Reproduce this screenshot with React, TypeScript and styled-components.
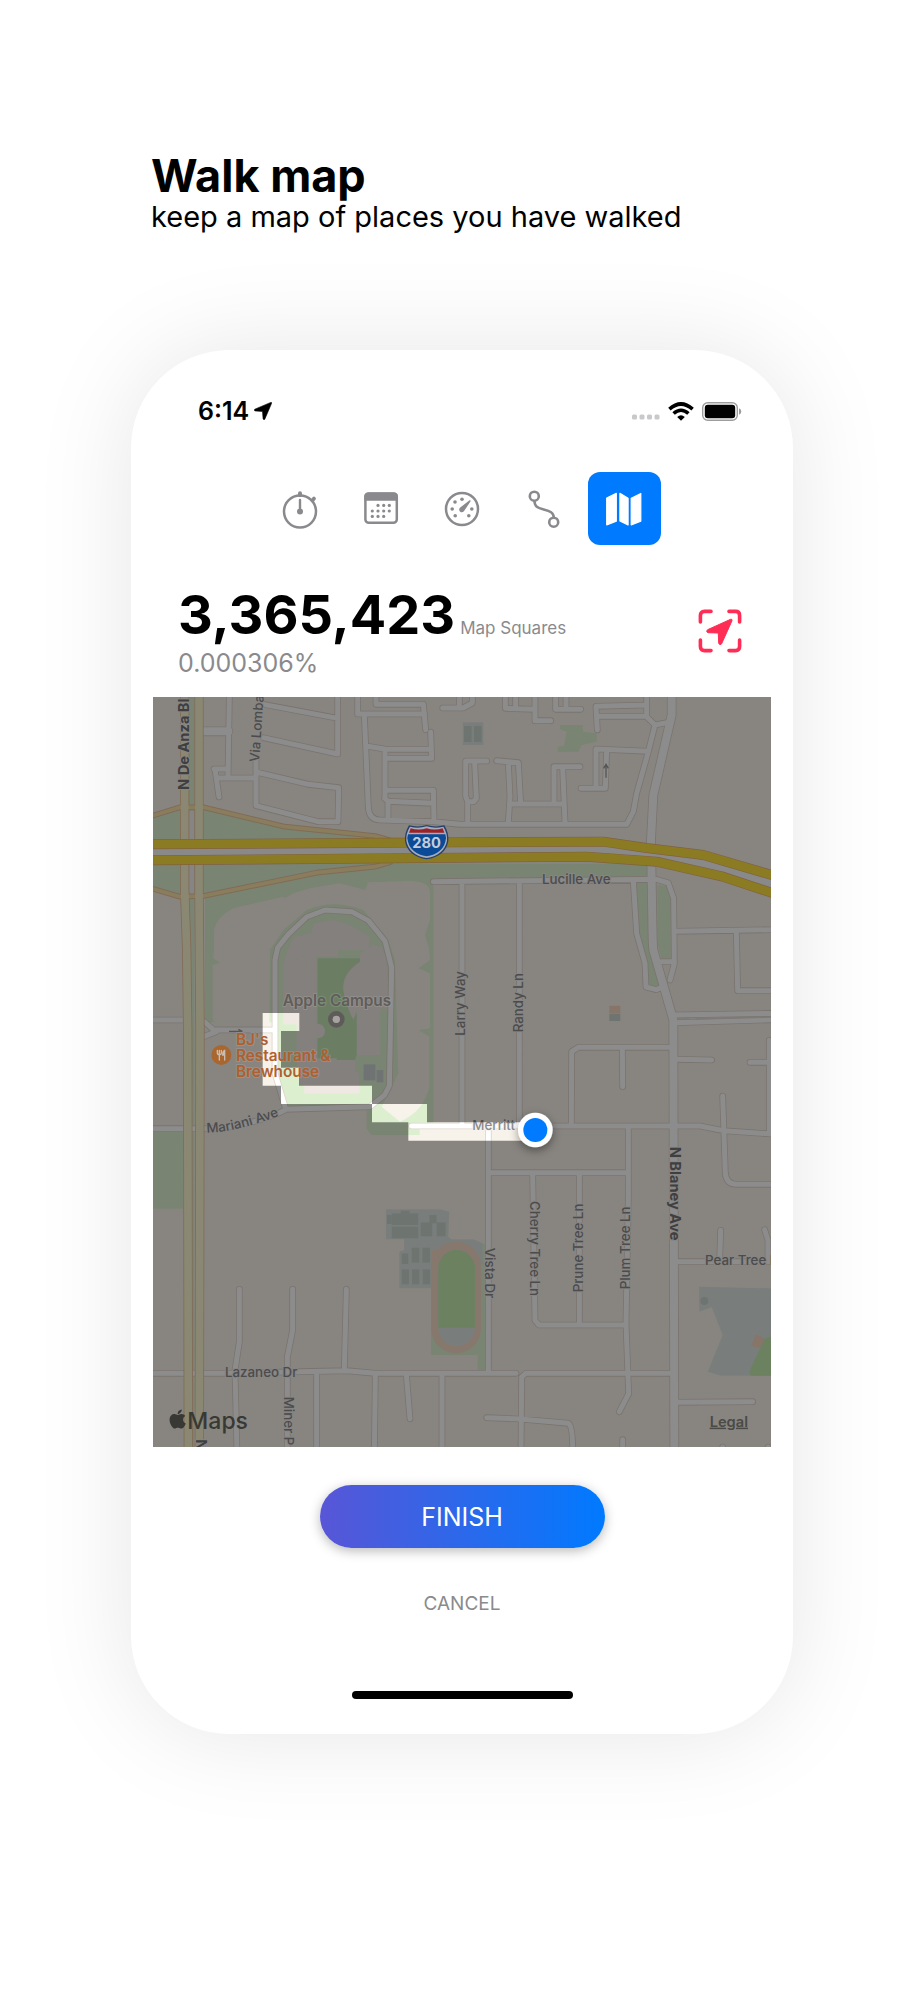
import React from "react";
import styled, { createGlobalStyle } from "styled-components";
import { FaApple } from "react-icons/fa";

const GlobalStyle = createGlobalStyle`
  *, *::before, *::after { box-sizing: border-box; }
  body {
    margin: 0;
    background: #fff;
    color: #000;
    font-family: Inter, "Liberation Sans", sans-serif;
  }
  button { font: inherit; border: 0; background: none; padding: 0; cursor: pointer; }
`;

const Page = styled.main`
  min-height: 100vh;
  padding: 152px 16px 200px;
  overflow: hidden;
`;

const Column = styled.div`
  width: 100%;
  max-width: 662px;
  margin: 0 auto;
`;

const Intro = styled.header`
  padding: 0 20px;
  margin-bottom: 116px;
`;

const Title = styled.h1`
  margin: 0;
  font-size: 45px;
  line-height: 48px;
  font-weight: 700;
`;

const Subtitle = styled.p`
  margin: 0;
  font-size: 29px;
  line-height: 34px;
`;

const Phone = styled.section`
  border-radius: 98px;
  background: #fff;
  padding: 43px 0 35px;
  box-shadow: 0 0 100px rgba(0, 0, 0, 0.1);
`;

const StatusBar = styled.div`
  display: flex;
  align-items: center;
  justify-content: space-between;
  height: 36px;
  padding: 0 51px 0 67px;
`;

const StatusGroup = styled.div<{ $gap: number }>`
  display: flex;
  align-items: center;
  gap: ${(p) => p.$gap}px;
`;

const Clock = styled.span`
  font-size: 25px;
  line-height: 32px;
  font-weight: 600;
`;

const Tabs = styled.nav`
  display: flex;
  justify-content: center;
  gap: 8px;
  margin-top: 43px;
`;

const Tab = styled.button<{ $active?: boolean }>`
  display: grid;
  place-items: center;
  width: 73px;
  height: 73px;
  border-radius: 12px;
  color: ${(p) => (p.$active ? "#fff" : "#8a8a8e")};
  background: ${(p) => (p.$active ? "#007aff" : "transparent")};
`;

const Summary = styled.div`
  display: flex;
  align-items: center;
  justify-content: space-between;
  padding: 0 49px 0 47px;
  margin: 38px 0 18px;
`;

const CountLine = styled.div`
  display: flex;
  align-items: baseline;
  gap: 5px;
`;

const Count = styled.strong`
  font-size: 54px;
  line-height: 64px;
  font-weight: 700;
`;

const CountUnit = styled.span`
  font-size: 17px;
  line-height: 20px;
  color: #8a8a8e;
`;

const Share = styled.div`
  font-size: 25px;
  line-height: 32px;
  color: #8a8a8e;
`;

const LocateButton = styled.button`
  display: block;
  height: 48px;
`;

const MapFrame = styled.div`
  margin: 0 22px;
`;

const MapCanvas = styled.svg`
  display: block;
  width: 100%;
  height: auto;
  overflow: hidden;
`;

const Street = styled.text<{ $major?: boolean }>`
  font-size: ${(p) => (p.$major ? 44 : 40)}px;
  font-weight: ${(p) => (p.$major ? 700 : 500)};
  fill: ${(p) => (p.$major ? "#747474" : "#8a8a8a")};
  stroke: #f6f3f0;
  stroke-width: 6px;
  stroke-linejoin: round;
  paint-order: stroke;
`;

const Place = styled.text<{ $color: string }>`
  font-size: 46px;
  font-weight: 600;
  fill: ${(p) => p.$color};
  stroke: #f2efec;
  stroke-opacity: 0.14;
  stroke-width: 6px;
  stroke-linejoin: round;
  paint-order: stroke;
`;

const MapBrand = styled.text`
  font-size: 69px;
  font-weight: 500;
  fill: #383834;
`;

const LegalText = styled.text`
  font-size: 44px;
  font-weight: 600;
  fill: #4a4a47;
  text-decoration: underline;
`;

const ShieldNumber = styled.text`
  font-size: 44px;
  font-weight: 700;
  fill: #c4cdda;
`;

const Actions = styled.div`
  display: flex;
  flex-direction: column;
  align-items: center;
  padding: 38px 24px 0;
`;

const FinishButton = styled.button`
  width: 285px;
  max-width: 100%;
  height: 63px;
  border-radius: 32px;
  color: #fff;
  font-size: 25px;
  background: linear-gradient(90deg, #5856d6, #007aff);
  box-shadow: 0 3px 12px rgba(0, 0, 0, 0.28);
`;

const CancelButton = styled.button`
  margin-top: 40px;
  font-size: 19px;
  line-height: 32px;
  color: #8a8a8e;
`;

const HomeBar = styled.div`
  width: 221px;
  height: 8px;
  border-radius: 4px;
  margin: 71px auto 0;
  background: #000;
`;

const calendarDots = [
  [17, 16.4], [22.7, 16.4], [28.3, 16.4],
  [11.3, 22], [17, 22], [22.7, 22], [28.3, 22],
  [11.3, 27.4], [17, 27.4], [22.7, 27.4],
];

const gaugeDots = [[13.2, 26.8], [10.2, 20], [13, 13], [20, 10.2], [29.8, 20], [26.8, 26.8]];

const tabs: { name: string; icon: React.ReactNode }[] = [
  {
    name: "Timer",
    icon: (
      <g fill="none" stroke="currentColor" strokeWidth="2.5" strokeLinecap="round">
        <circle cx="20" cy="22.5" r="16" />
        <path d="M20 4.2V6" strokeWidth="4" />
        <path d="M32.4 11.4L34 9.6" strokeWidth="3.8" />
        <path d="M20 11V22" strokeWidth="2.4" />
        <circle cx="20" cy="22.5" r="3" fill="currentColor" stroke="none" />
      </g>
    ),
  },
  {
    name: "Calendar",
    icon: (
      <g fill="currentColor">
        <rect x="4.4" y="4.6" width="31.4" height="29.2" rx="3.4" fill="none" stroke="currentColor" strokeWidth="2.5" />
        <path d="M3.2 11.8V7.4q0-4 4-4h25.8q4 0 4 4v4.4z" />
        {calendarDots.map(([x, y]) => (
          <circle key={`${x}-${y}`} cx={x} cy={y} r="1.6" />
        ))}
      </g>
    ),
  },
  {
    name: "Speed",
    icon: (
      <g fill="currentColor">
        <circle cx="20" cy="20" r="16" fill="none" stroke="currentColor" strokeWidth="2.5" />
        {gaugeDots.map(([x, y]) => (
          <circle key={`${x}-${y}`} cx={x} cy={y} r="1.8" />
        ))}
        <path d="M28.6 12.2L21.9 22.3q-1.7 1.8-3.7.5-1.9-1.8-.3-4l9.7-7.5q1.1-.4 1 .9z" />
      </g>
    ),
  },
  {
    name: "Route",
    icon: (
      <g fill="none" stroke="currentColor" strokeWidth="2.6">
        <circle cx="11.3" cy="7.2" r="4.5" />
        <circle cx="30.7" cy="33.2" r="4.5" />
        <path d="M11.4 11.8C11.7 17.8 14.4 18.8 20.7 20.5S30.7 23.5 30.8 28.6" />
      </g>
    ),
  },
  {
    name: "Map",
    icon: (
      <g fill="currentColor" stroke="currentColor" strokeWidth="1.2" strokeLinejoin="round">
        <path d="M2.7 9L12.3 4.3V32.2L2.7 35.9z" />
        <path d="M15.9 4.3L24.1 9.2V35.9L15.9 32z" />
        <path d="M27.2 9.2L36.8 4.5V32.2L27.2 35.9z" />
      </g>
    ),
  },
];

const minorRoads = [
  "M229 0L225 243", "M183 216H222", "M186 216L198 300", "M198 243H309",
  "M309 180V326L496 374H555L557 272L466 262L309 225", "M331 22L554 64", "M554 0V171L331 122",
  "M614 0V51H815", "M669 0V22H811L818 98",
  "M634 54L646 330Q648 368 680 369L841 374L921 382H1421L1441 344L1451 289L1486 164L1506 84L1481 59V0",
  "M644 148L698 157H835", "M833 105L836 184H700", "M696 157V303", "M698 280H841L843 370",
  "M695 304L706 313L841 319", "M705 315V368", "M869 33H930L958 18V0", "M919 0V30",
  "M1001 192H938V298L944 314V376", "M965 196L970 304L962 314H944",
  "M1031 191L1096 197L1103 319", "M1066 198L1071 299L1066 376", "M1071 321H1229",
  "M1281 209H1203V320", "M1229 212L1236 376", "M1057 0V34L1146 37V71H1193", "M1088 0V30",
  "M1146 0V37", "M1208 0V37H1283", "M1239 0V34", "M1333 99L1329 28L1481 24", "M1331 58H1481",
  "M1329 272V156L1486 163", "M1361 160L1357 274H1284", "M1506 84L1546 76",
  "M841 554L1511 547L1546 558L1562 604L1564 800L1551 849", "M1526 794H1561",
  "M1441 552L1451 709L1476 799L1479 870L1510 878L1525 872",
  "M927 560V1279", "M1099 552V1285", "M1566 703L1870 698", "M1750 705L1754 881H1870",
  "M1561 954L1870 949", "M1565 977L1870 968",
  "M1255 1285L1256 1064L1276 1051H1560", "M1408 1055L1409 1169", "M1570 1087L1676 1089",
  "M1791 1096H1851", "M1849 1030V1310", "M776 1287H1641L1711 1301L1870 1312",
  "M1709 1197L1717 1429Q1720 1462 1751 1462H1870", "M1006 1295V2024", "M1006 1427H1426",
  "M1426 1293V1500L1419 1880L1427 2090L1399 2144", "M1139 1430L1146 1870L1158 1884H1419",
  "M1279 1430V1884", "M1576 1694H1870", "M1703 1600L1700 1690", "M1835 1598L1845 1630V1690",
  "M-20 2029H216L581 2021L666 2029H1089", "M1104 2270L1106 2040L1118 2029H1560",
  "M1572 2116L1799 2114", "M1001 2162L1101 2166L1247 2179Q1260 2190 1259 2270",
  "M1409 2228V2270", "M1709 2250V2270", "M1846 2250V2270",
  "M259 1777V1934L246 2020L252 2270", "M419 1777V1899L403 1980V2270", "M580 1777L574 2015",
  "M491 2025V2270", "M667 2030L664 2270", "M760 2034L771 2165", "M867 2034V2270",
  "M-20 969H90", "M154 974L181 998L358 999", "M154 1018L190 1004",
  "M-20 1295H161Q260 1295 376 1249L401 1237",
].join("");

const ringRoad =
  "M396 1229L366 1129V789L374 752L406 712L461 660L516 639L596 644L646 671L696 732L716 811L709 1166L695 1194L651 1229L396 1237";
const blaney = "M1556 -20V54L1501 294L1494 430L1499 729L1501 759L1561 969L1564 2270";
const deAnza = "M95 -20V579L101 759L104 1000L106 2270M138 -20V579L141 1000L139 2270";
const ramps = "M-20 362L81 331H151L396 389L666 417L711 430M-20 570L81 599L151 597L491 527L666 509L711 496";
const freeway =
  "M-20 442L921 436L1351 434L1481 453L1651 474L1880 541M-20 490L921 482L1301 479L1511 494L1706 538L1880 595";
const walked =
  "M329 948H439V1002H384V1112H438V1166H657V1221H822V1276H1147V1331H766V1276H657V1221H384V1166H329Z";

const schoolBlocks = [
  [716, 1549, 80, 35], [743, 1541, 27, 10], [716, 1589, 80, 35], [702, 1554, 14, 27], [803, 1576, 35, 42],
  [829, 1554, 22, 25], [851, 1576, 27, 42], [776, 1652, 23, 45], [808, 1652, 23, 45], [746, 1669, 20, 32],
  [746, 1717, 22, 45], [777, 1717, 22, 45], [809, 1717, 22, 45],
];

function WalkMap() {
  return (
    <MapCanvas viewBox="0 0 1854 2250" role="img" aria-label="Map of walked places">
      <defs>
        <path id="mariani" d="M161 1307Q250 1306 385 1254" />
        <filter id="pinShadow" x="-50%" y="-50%" width="200%" height="200%">
          <feDropShadow dx="0" dy="10" stdDeviation="14" floodOpacity="0.4" />
        </filter>
      </defs>

      <rect width="1854" height="2250" fill="#f7f3ea" />

      {/* parks and verges */}
      <g fill="#dcf0d0">
        <path d="M0 362L81 334H151L396 391L690 420V500H1484V548H841V1277H800V1314H655L641 1295V1229H396L366 1130V976H156V600L81 600L0 575Z" />
        <rect x="108" y="0" width="16" height="2250" />
        <rect y="1305" width="90" height="230" />
        <path d="M1451 554H1486L1490 740L1517 866H1486L1483 790L1458 700ZM1513 564L1540 568L1553 604V784H1525L1513 740Z" />
        <path d="M834 1880V1974H974V2019H1000V1640H960Z" />
        <path d="M1221 84H1289L1291 104L1331 109V134L1286 144L1276 164H1214V149L1233 147L1241 104L1221 97Z" />
      </g>
      <path d="M183 759V709Q183 665 241 634L391 599L396 604L421 589L471 574L561 559L636 579L646 556L771 552Q831 552 831 589V669L816 714L829 759L831 789L796 814L831 829V994L796 999L829 1019V1169Q815 1240 741 1274L686 1229Q715 1180 736 1129L726 789L706 729L691 709L631 639Q541 604 461 639L391 699L351 759L349 979L191 976Q179 976 179 964V804L201 797L181 784Z" fill="#f7f3ea" />
      <g fill="#f0e9e3">
        <path d="M400 770L421 722L475 708L481 679L541 669L591 684L651 719L646 759H556V779H491V814H461V774L391 800Z" />
        <path d="M391 800L461 774V814H491V1084H551V1089H606V1120L619 1129V1189H454V1166L439 1160L431 1100V982H391Z" />
        <path d="M621 769L661 744L686 749L701 789L706 935H681V1074H611V939L601 969Q555 890 571 829L621 794Z" />
      </g>
      <path d="M494 784H621V794Q566 830 571 880Q580 930 601 968L611 945V1074L606 1089H551V1084H494Z" fill="#c3e6b6" />
      <circle cx="494" cy="1002" r="22" fill="#f0e9e3" />
      <g fill="#ccd2d1">
        <rect x="632" y="1102" width="35" height="48" />
        <rect x="671" y="1119" width="20" height="37" />
      </g>

      {/* schools and buildings */}
      <g fill="#dde6e2">
        <rect x="929" y="76" width="62" height="68" />
        <path d="M699 1537H861L889 1544L886 1619L896 1627H961L989 1639V1700L834 1774H739V1664L753 1659V1627H699Z" />
        <path d="M1638 1769L1856 1774V2036H1703L1664 2024L1709 1914L1676 1831L1639 1844Z" />
      </g>
      <g fill="#c8d4cc">
        <rect x="933" y="87" width="23" height="48" />
        <rect x="963" y="87" width="23" height="48" />
        {schoolBlocks.map(([x, y, w, h]) => (
          <rect key={`${x}-${y}`} x={x} y={y} width={w} height={h} />
        ))}
        <circle cx="1654" cy="1812" r="12" />
        <rect x="1369" y="950" width="33" height="22" />
      </g>
      <rect x="834" y="1634" width="150" height="335" rx="75" fill="#f6dac8" />
      <path d="M834 1657H870V1720H834Z" fill="#f6dac8" />
      <rect x="856" y="1659" width="110" height="288" rx="55" fill="#dde6e2" />
      <path d="M856 1892V1714a55 55 0 0 1 110 0V1892Z" fill="#c3ebae" />
      <path d="M1834 1926L1856 1917V2036H1793L1789 2024Z" fill="#c3ebae" />
      <path d="M1809 1911L1834 1924L1824 1954L1794 1946ZM1369 926H1402V949H1369Z" fill="#f6d5c0" />

      {/* roads */}
      <g fill="none" strokeLinejoin="round" strokeLinecap="round">
        <path d={minorRoads + ringRoad} stroke="#dfd3ca" strokeWidth="20" />
        <path d={blaney} stroke="#dfd3ca" strokeWidth="29" />
        <path d="M150 103H226" stroke="#dfd3ca" strokeWidth="29" />
        <path d={minorRoads + ringRoad} stroke="#fff" strokeWidth="15" />
        <path d={blaney} stroke="#fff" strokeWidth="24" />
        <path d="M150 103H226" stroke="#fff" strokeWidth="24" />
        <path d="M1573 966H1610M1628 966L1854 960" stroke="#e6ddd5" strokeWidth="5" strokeLinecap="butt" />
        <path d="M116 350V590" stroke="#f5f1f0" strokeWidth="18" />
        <path d={ramps} stroke="#eac39d" strokeWidth="17" />
        <path d={deAnza} stroke="#eac39d" strokeWidth="28" />
        <path d={ramps} stroke="#fbe4ac" strokeWidth="11" />
        <path d={deAnza} stroke="#fbf8cf" strokeWidth="23" />
        <path d="M-20 466L921 459L1326 456L1496 474L1680 506L1880 568" stroke="#fcfafa" strokeWidth="26" />
        <path d={freeway} stroke="#eab07a" strokeWidth="30" />
        <path d={freeway} stroke="#fee041" strokeWidth="26" />
      </g>
      <g fill="none" stroke="#9b9b9b" strokeWidth="4">
        <path d="M1359 242V203M1352 214L1359 202L1366 214" />
        <path d="M228 1003H268L256 997" />
      </g>

      {/* street names */}
      <Street $major transform="translate(109 279) rotate(-90)">N De Anza Bl</Street>
      <Street $major transform="translate(1552 1349) rotate(90)">N Blaney Ave</Street>
      <Street $major transform="translate(128 2227) rotate(90)">N</Street>
      <Street transform="translate(318 196) rotate(-86)">Via Lomba</Street>
      <Street x="1167" y="560">Lucille Ave</Street>
      <Street transform="translate(937 1016) rotate(-90)">Larry Way</Street>
      <Street transform="translate(1109 1006) rotate(-90)">Randy Ln</Street>
      <Street x="958" y="1299">Merritt</Street>
      <Street><textPath href="#mariani">Mariani Ave</textPath></Street>
      <Street transform="translate(996 1652) rotate(90)">Vista Dr</Street>
      <Street transform="translate(1130 1512) rotate(90)">Cherry Tree Ln</Street>
      <Street transform="translate(1289 1786) rotate(-90)">Prune Tree Ln</Street>
      <Street transform="translate(1431 1777) rotate(-90)">Plum Tree Ln</Street>
      <Street x="1656" y="1705">Pear Tree L</Street>
      <Street x="216" y="2039">Lazaneo Dr</Street>
      <Street transform="translate(393 2099) rotate(90)">Miner P</Street>

      {/* everything not yet walked is shaded */}
      <path d={"M0 0H1854V2250H0Z" + walked} fillRule="evenodd" fillOpacity="0.45" fill="#000" />

      {/* places */}
      <circle cx="550" cy="967" r="18" fill="none" stroke="#5f5b5b" strokeWidth="14" />
      <circle cx="550" cy="967" r="11" fill="#a6a3a0" />
      <Place $color="#605d5b" x="389" y="927">Apple Campus</Place>
      <circle cx="205" cy="1074" r="30" fill="#a9662f" />
      <g fill="none" stroke="#c9bcb0" strokeWidth="4" strokeLinecap="round">
        <path d="M193 1060V1068Q193 1073 199 1073Q205 1073 205 1068V1060M199 1060V1089" />
        <path d="M215 1089V1060Q209 1062 209 1074H214" fill="#c9bcb0" />
      </g>
      <Place $color="#b05f2f" x="249" y="1044">BJ's</Place>
      <Place $color="#b05f2f" x="249" y="1092">Restaurant &amp;</Place>
      <Place $color="#b05f2f" x="249" y="1139">Brewhouse</Place>

      {/* interstate shield */}
      <path d="M768 385Q795 392 821 384Q847 392 874 385Q888 408 886 432Q878 478 821 487Q764 478 756 432Q754 408 768 385Z" fill="#26406c" />
      <path d="M771 389Q796 396 821 388Q846 396 871 389Q884 410 882 431Q874 474 821 483Q768 474 760 431Q758 410 771 389Z" fill="#a7adb8" />
      <path d="M765 412H877Q881 422 877 434Q868 469 821 478Q774 469 765 434Q761 422 765 412Z" fill="#0b4a97" />
      <path d="M773 394Q797 401 821 394Q845 401 869 394L874 407H768Z" fill="#9c2229" />
      <ShieldNumber x="821" y="453" textAnchor="middle">280</ShieldNumber>

      {/* attribution */}
      <FaApple x="41" y="2133" size={66} color="#383834" />
      <MapBrand x="103" y="2195">Maps</MapBrand>
      <a href="#legal">
        <LegalText x="1670" y="2189">Legal</LegalText>
      </a>

      {/* current position */}
      <circle cx="1147" cy="1299" r="52" fill="#fff" filter="url(#pinShadow)" />
      <circle cx="1147" cy="1299" r="36" fill="#007aff" />
    </MapCanvas>
  );
}

export default function App() {
  return (
    <>
      <GlobalStyle />
      <Page>
        <Column>
          <Intro>
            <Title>Walk map</Title>
            <Subtitle>keep a map of places you have walked</Subtitle>
          </Intro>
          <Phone>
            <StatusBar>
              <StatusGroup $gap={5}>
                <Clock>6:14</Clock>
                <svg width="18" height="18" viewBox="0 0 18 18" aria-hidden="true">
                  <path d="M16.8 .4L.8 7.2Q-.3 8.2 .9 8.9L8.5 9.4L9.1 17Q9.9 18.4 10.8 17.2L17.6 1.3Q17.8 .2 16.8 .4Z" stroke="#000" strokeWidth=".6" />
                </svg>
              </StatusGroup>
              <StatusGroup $gap={8}>
                <svg width="28" height="18" viewBox="0 0 28 18" fill="#c9c9cb" aria-hidden="true">
                  {[0, 7.5, 15, 22.5].map((x) => (
                    <rect key={x} x={x} y="12.5" width="5" height="5" rx="1.5" />
                  ))}
                </svg>
                <svg width="26" height="19" viewBox="0 0 26 19" fill="none" stroke="#000" strokeWidth="3.6" aria-hidden="true">
                  <path d="M1.4 7.2Q13-3.2 24.6 7.2" />
                  <path d="M5.6 11.5Q13 5 20.4 11.5" />
                  <path d="M13 18.8L9.2 14.9Q13 11.8 16.8 14.9Z" fill="#000" stroke="none" />
                </svg>
                <svg width="40" height="19" viewBox="0 0 40 19" aria-hidden="true">
                  <rect x=".7" y=".7" width="34.6" height="17.6" rx="5" fill="none" stroke="#9c9c9c" strokeWidth="1.4" />
                  <rect x="2.8" y="2.8" width="30.4" height="13.4" rx="3" />
                  <path d="M37 6.3Q39.3 7.2 39.3 9.5T37 12.7Z" fill="#9c9c9c" />
                </svg>
              </StatusGroup>
            </StatusBar>

            <Tabs aria-label="Sections">
              {tabs.map((tab) => (
                <Tab key={tab.name} type="button" aria-label={tab.name} $active={tab.name === "Map"}>
                  <svg width="40" height="40" viewBox="0 0 40 40" aria-hidden="true">
                    {tab.icon}
                  </svg>
                </Tab>
              ))}
            </Tabs>

            <Summary>
              <div>
                <CountLine>
                  <Count>3,365,423</Count>
                  <CountUnit>Map Squares</CountUnit>
                </CountLine>
                <Share>0.000306%</Share>
              </div>
              <LocateButton type="button" aria-label="Center on my location">
                <svg width="48" height="48" viewBox="0 0 48 48" aria-hidden="true">
                  <path
                    d="M4.4 15V8.4Q4.4 4.4 8.4 4.4H15M33 4.4H39.6Q43.6 4.4 43.6 8.4V15M43.6 33V39.6Q43.6 43.6 39.6 43.6H33M15 43.6H8.4Q4.4 43.6 4.4 39.6V33"
                    fill="none"
                    stroke="#ff2d55"
                    strokeWidth="3.6"
                    strokeLinecap="round"
                  />
                  <path d="M34.6 12.3L11.6 22.7Q9.4 24.6 12 25.7L22.3 26L22.7 36.3Q23.7 39 25.6 36.8L36 13.7Q36.4 11.6 34.6 12.3Z" fill="#ff2d55" stroke="#ff2d55" />
                </svg>
              </LocateButton>
            </Summary>

            <MapFrame>
              <WalkMap />
            </MapFrame>

            <Actions>
              <FinishButton type="button">FINISH</FinishButton>
              <CancelButton type="button">CANCEL</CancelButton>
            </Actions>
            <HomeBar />
          </Phone>
        </Column>
      </Page>
    </>
  );
}
